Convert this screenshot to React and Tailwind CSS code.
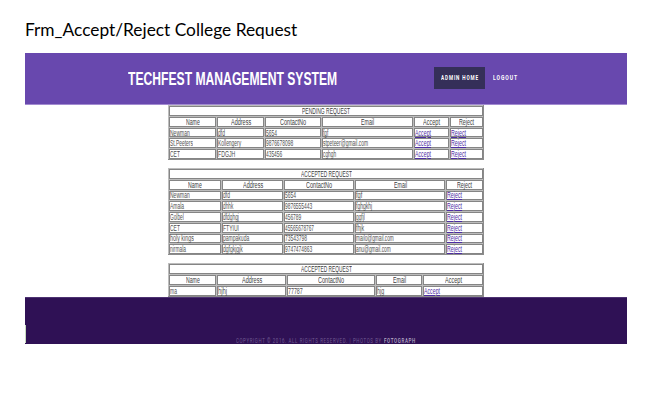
import React, { useLayoutEffect, useRef, useState } from "react";

// Condenses a single line of text horizontally to the given width.
function Fit({ w, className = "", children }) {
  const ref = useRef(null);
  const [scale, setScale] = useState(1);
  useLayoutEffect(() => {
    setScale(w / ref.current.offsetWidth);
  }, [w]);
  return (
    <span className="block shrink-0" style={{ width: w }}>
      <span
        ref={ref}
        className={"block w-max origin-left whitespace-nowrap " + className}
        style={{ transform: `scaleX(${scale})` }}
      >
        {children}
      </span>
    </span>
  );
}

function Cell({ item, center, span }) {
  const [text, w] = item;
  const link = !center && (text === "Accept" || text === "Reject");
  return (
    <div
      className={
        "flex min-w-0 items-center border border-[#858585] bg-white " +
        (center ? "justify-center " : "") +
        (span ? "col-span-full" : "")
      }
    >
      <Fit w={w} className={link ? "text-[#4d2da3] underline" : center ? "text-[#3c3c3c]" : "text-[#505050]"}>
        {text}
      </Fit>
    </div>
  );
}

function RequestTable({ title, head, rows, className }) {
  return (
    <div className={"grid w-[316px] auto-rows-fr gap-px border-b border-r border-[#8c8c8c] bg-[#bdbdbd] pl-px pt-px text-[8.5px] leading-[8px] font-['Liberation_Sans',sans-serif] " + className}>
      <Cell item={title} center span />
      {head.map((h, i) => <Cell key={i} item={h} center />)}
      {rows.flat().map((c, i) => <Cell key={"r" + i} item={c} />)}
    </div>
  );
}

const A = ["Accept", 16];
const R = ["Reject", 15];

export default function App() {
  return (
    <div className="h-[402px] w-[660px] overflow-hidden bg-white pl-[25px] pt-[18px] font-['Liberation_Sans',sans-serif]">
      <h1 className="h-[35px] font-['Lato',sans-serif] text-[17px] leading-[23px] text-black">
        <Fit w={272}>Frm_Accept/Reject College Request</Fit>
      </h1>
      <div className="flex h-[291px] w-[602px] flex-col">
        <header className="flex h-[52px] shrink-0 items-center border-b border-[#a28bd0] bg-[#6848ae] pl-[103px] text-white">
          <div className="w-[306px] text-[19px] font-bold leading-[20px]">
            <Fit w={209}>TECHFEST MANAGEMENT SYSTEM</Fit>
          </div>
          <nav className="-mt-px flex items-center font-['Roboto',sans-serif] text-[7.5px] font-bold leading-[8px]">
            <a className="mr-2 flex h-[22px] w-[51px] items-center justify-center bg-[#352f59]">
              <Fit w={38} className="tracking-[1.4px]">ADMIN HOME</Fit>
            </a>
            <Fit w={25} className="tracking-[1.4px]">LOGOUT</Fit>
          </nav>
        </header>
        <main className="flex h-[192px] shrink-0 flex-col items-start pl-[143px]">
          <RequestTable
            className="h-[55px] grid-cols-[47px_47px_56px_91px_35px_33px]"
            title={["PENDING REQUEST", 48]}
            head={[["Name", 14], ["Address", 20], ["ContactNo", 26], ["Email", 13], ["Accept", 17], ["Reject", 15]]}
            rows={[
              [["Newman", 20], ["dfd", 7], ["5654", 11], ["fgf", 5], A, R],
              [["St.Peeters", 23], ["Kollengery", 23], ["9876678098", 27], ["stpeteer@gmail.com", 45], A, R],
              [["CET", 10], ["FDGJH", 17], ["435456", 16], ["cghgh", 13], A, R],
            ]}
          />
          <RequestTable
            className="mt-2 h-[87px] grid-cols-[52px_61px_70px_90px_37px]"
            title={["ACCEPTED REQUEST", 51]}
            head={[["Name", 14], ["Address", 20], ["ContactNo", 26], ["Email", 13], ["Reject", 15]]}
            rows={[
              [["Newman", 20], ["dfd", 7], ["5654", 11], ["fgf", 6], R],
              [["Amala", 14], ["dhhk", 10], ["9876555443", 27], ["fghgkhj", 16], R],
              [["Golbel", 14], ["dfdghgj", 16], ["456789", 16], ["ggfjl", 9], R],
              [["CET", 10], ["FTYIUI", 16], ["45565678767", 29], ["fhjk", 8], R],
              [["holy kings", 24], ["pampakuda", 26], ["73543798", 22], ["mailo@gmail.com", 38], R],
              [["nirmala", 16], ["dgfgkjgjk", 20], ["9747474863", 27], ["anu@gmail.com", 35], R],
            ]}
          />
          <RequestTable
            className="mt-2 h-[34px] grid-cols-[47px_69px_88px_46px_60px]"
            title={["ACCEPTED REQUEST", 51]}
            head={[["Name", 14], ["Address", 20], ["ContactNo", 26], ["Email", 13], ["Accept", 17]]}
            rows={[[["ma", 7], ["hjhj", 9], ["77787", 15], ["hjg", 7], A]]}
          />
        </main>
        <footer className="flex h-[47px] shrink-0 items-end border-t border-[#4d3272] bg-[#2f1155] font-['Roboto',sans-serif] text-[7px] leading-[6px]">
          <div className="mb-px h-[18px] w-px bg-[#c9dcc0]" />
          <div className="flex gap-[2px] pl-[210px]">
            <Fit w={146} className="tracking-[1px] text-[#725b92]">COPYRIGHT © 2016. ALL RIGHTS RESERVED. | PHOTOS BY</Fit>
            <Fit w={32} className="tracking-[1px] font-medium text-[#b9adc8]">FOTOGRAPH</Fit>
          </div>
        </footer>
      </div>
    </div>
  );
}
